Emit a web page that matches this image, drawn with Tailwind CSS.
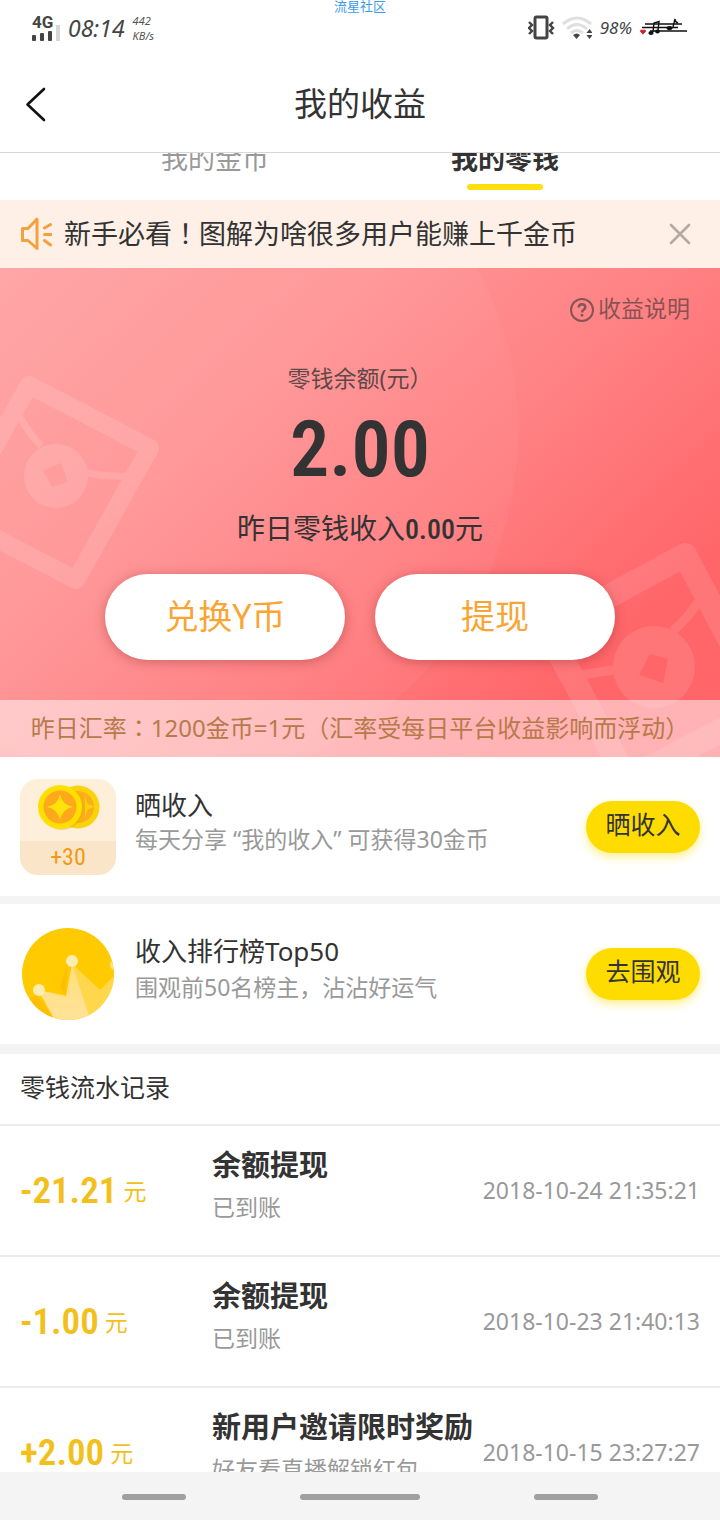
<!DOCTYPE html>
<html lang="zh-CN">
<head>
<meta charset="utf-8">
<meta name="viewport" content="width=device-width, initial-scale=1">
<title>我的收益</title>
<script src="https://cdn.jsdelivr.net/npm/@tailwindcss/browser@4"></script>
</head>
<body class="flex h-screen flex-col overflow-hidden bg-white font-['Noto_Sans','Noto_Sans_CJK_SC',sans-serif] text-[#333]">

<!-- Status bar -->
<div class="relative flex h-14 shrink-0 items-center justify-between pl-8 pr-8">
  <div class="flex items-center gap-2">
    <div class="flex flex-col">
      <span class="font-['Roboto',sans-serif] text-[17px] leading-4 font-bold text-[#444]">4G</span>
      <svg class="h-3 w-7 overflow-visible" viewBox="0 0 28 12" aria-hidden="true">
        <rect x="0" y="5" width="4" height="6" rx="1" fill="#444"/><rect x="8" y="3" width="4" height="8" rx="1" fill="#444"/><rect x="16" y="1" width="4" height="10" rx="1" fill="#444"/><rect x="24" y="-5" width="4" height="16" fill="#d8d8d8"/>
      </svg>
    </div>
    <span class="text-[23px] leading-7 italic text-[#444]">08:14</span>
    <span class="flex flex-col text-[11px] leading-[15px] italic text-[#555]"><span>442</span><span>KB/s</span></span>
  </div>
  <span class="absolute top-0 left-1/2 -translate-x-1/2 text-[13px] leading-3 text-[#3c9be8]">流星社区</span>
  <div class="flex items-center gap-2">
    <svg class="h-7 w-16" viewBox="528 14 64 28" aria-hidden="true" fill="none">
      <rect x="535" y="17" width="12" height="21" rx="1.500" stroke="#444" stroke-width="3"/>
      <path d="M529 22l3 3-3 3 3 3-3 3M553 22l-3 3 3 3-3 3 3 3" stroke="#444" stroke-width="2.400"/>
      <path d="M563 24Q577 12 591 24M567 29Q577 20 587 29M571 33Q577 28 583 33" stroke="#dfdfdf" stroke-width="3"/>
      <path d="M573 35q4-3 7 0l-3.500 4z" fill="#444"/>
      <path d="M589.500 29l3 4h-6zM589.500 39l3-4h-6z" fill="#444"/>
    </svg>
    <span class="text-[17px] leading-7 italic text-[#444]">98%</span>
    <svg class="h-7 w-12" viewBox="640 14 48 28" aria-hidden="true" fill="none">
      <path d="M643 34.500l-3-3q0-2 1.500-2t1.500 1q0-1 1.500-1t1.500 2z" fill="#d3202c"/>
      <path d="M645 24h37M642 27.500h36M650 31h37" stroke="#111" stroke-width="1.300"/>
      <path d="M653 32l1-9 5-1.500-1 9M673 27l2-8q0 3 3 4" stroke="#111" stroke-width="1.400"/>
      <ellipse cx="651" cy="33" rx="2.600" ry="2" fill="#111"/><ellipse cx="657.500" cy="31.500" rx="2.400" ry="2" fill="#111"/><ellipse cx="669.500" cy="28" rx="3" ry="2" fill="#111"/>
    </svg>
  </div>
</div>

<!-- Title bar -->
<header class="grid h-[97px] shrink-0 grid-cols-[80px_1fr_80px] items-center border-b border-[#d8d8d8]">
  <button type="button" aria-label="返回" class="flex h-16 items-center pl-6">
    <svg class="h-9 w-6" viewBox="0 0 24 36" fill="none" stroke="#111" stroke-width="2.600" stroke-linecap="round" stroke-linejoin="round" aria-hidden="true"><path d="M20 3L3.500 18.500L20 34"/></svg>
  </button>
  <h1 class="text-center text-[33px] leading-10">我的收益</h1>
</header>

<main class="flex-1 overflow-hidden">
  <!-- Tabs, partly scrolled under the title bar -->
  <nav class="h-[47px] overflow-hidden px-[70px]">
    <div class="-mt-[14px] grid grid-cols-2 text-[27px] leading-10">
      <a href="#coins" class="flex flex-col items-center text-[#999]">我的金币</a>
      <a href="#change" class="flex flex-col items-center gap-[5px] font-bold">我的零钱<span class="h-[6px] w-19 rounded-sm bg-[#ffdf0d]"></span></a>
    </div>
  </nav>

  <!-- Notice -->
  <div class="flex h-17 items-center bg-[#fef0e6] pr-7 pl-5">
    <svg class="mr-3 h-9 w-8" viewBox="0 0 32 36" fill="none" stroke="#f3a13c" stroke-width="3" stroke-linecap="round" stroke-linejoin="round" aria-hidden="true"><path d="M2.500 12.500h5.500L17 3v29.500L8 24.500H2.500zM24.500 12l6-3.500M24.500 18.500h6.500M24.500 24.500l6 4.500"/></svg>
    <p class="flex-1 pb-[2px] text-[27px] leading-8 whitespace-nowrap">新手必看<span lang="zh-TW" class="font-['Noto_Sans_CJK_TC',sans-serif]">！</span>图解为啥很多用户能赚上千金币</p>
    <button type="button" aria-label="关闭"><svg class="h-6 w-6" viewBox="0 0 24 24" stroke="#b3aaa4" stroke-width="2.600" stroke-linecap="round" aria-hidden="true"><path d="M3 3l18 18M21 3L3 21"/></svg></button>
  </div>

  <!-- Balance -->
  <section class="relative bg-[linear-gradient(137deg,#ffa3a4_0%,#ff9596_30%,#ff8183_55%,#ff666a_82%,#ff6569_100%)]">
    <svg class="absolute inset-0 h-full w-full" viewBox="0 0 720 489" preserveAspectRatio="xMidYMid slice" fill="none" aria-hidden="true">
      <circle cx="165" cy="165" r="353" fill="#fff" fill-opacity=".04"/>
      <g opacity=".12" stroke="#fff" stroke-linejoin="round">
        <path d="M29 117L150 180L76 312L-45 249Z" stroke-width="18"/>
        <path d="M20 149q10 18 21 29M87 205q20 4 40 3" stroke-width="7"/>
        <path d="M56 176a32 32 0 1 1-.1 0zM43 202L52 219L68 214L61 195Z" fill="#fff" fill-rule="evenodd" stroke="none"/>
      </g>
      <g opacity=".1" stroke="#fff" stroke-linejoin="round">
        <path d="M685 287L765 439L627 512L547 362Z" stroke-width="24"/>
        <path d="M673 363q14-12 25-29M613 402l-32 5" stroke-width="9"/>
        <path d="M654 358a41 41 0 1 1-.1 0zM650 386L639 407L663 415L668 391Z" fill="#fff" fill-rule="evenodd" stroke="none"/>
      </g>
    </svg>
    <div class="relative flex flex-col items-center px-5 pt-6 pb-10">
      <a href="#explain" class="mr-[10px] flex items-center gap-1 self-end text-[23px] leading-8 text-[#333]/60">
        <svg class="mt-1 h-6 w-6" viewBox="0 0 24 24" fill="none" stroke="currentColor" stroke-width="2" aria-hidden="true"><circle cx="12" cy="12" r="11"/><path d="M8.700 9.500q0-3.300 3.300-3.300t3.300 3q0 1.500-1.700 2.600T12 14.500" stroke-width="2.400"/><path d="M12 16v2.500" stroke-width="2.600"/></svg>收益说明</a>
      <p class="mt-[38px] text-[23px] leading-8 text-[#333]/80">零钱余额(元）</p>
      <p class="mt-3 font-['Roboto_Condensed','Roboto',sans-serif] text-[78px] leading-[88px] font-semibold">2.00</p>
      <p class="mt-[14px] h-10 text-[28px] leading-10">昨日零钱收入<span class="font-['Roboto_Condensed','Roboto',sans-serif] font-medium">0.00</span>元</p>
      <div class="mt-[26px] flex gap-[30px] text-[34px] leading-10 text-[#f9a534]">
        <button type="button" class="h-[86px] w-60 rounded-full bg-white pb-[2px] shadow-[0_2px_12px_rgba(120,30,30,0.35)]">兑换Y币</button>
        <button type="button" class="h-[86px] w-60 rounded-full bg-white pb-[2px] shadow-[0_2px_12px_rgba(120,30,30,0.35)]">提现</button>
      </div>
    </div>
    <p class="relative h-[57px] overflow-hidden bg-white/50 px-2 text-center text-[24px] leading-[54px] whitespace-nowrap text-[#b87a4a]">昨日汇率<span lang="zh-TW" class="font-['Noto_Sans_CJK_TC',sans-serif]">：</span>1200金币=1元（汇率受每日平台收益影响而浮动）</p>
  </section>

  <!-- Tasks -->
  <section class="flex h-[139px] items-center px-5">
    <div class="mr-[19px] flex h-24 w-24 shrink-0 flex-col overflow-hidden rounded-[18px] bg-[#fdefd9]">
      <svg class="h-[62px] w-24 shrink-0" viewBox="0 0 96 62" aria-hidden="true">
        <circle cx="58" cy="28" r="21.500" fill="#fbd30a"/><circle cx="58" cy="28" r="16" fill="#fbae18"/>
        <path d="M65 17l2.500 8 7 2.500-7 3-2.500 8z" fill="#fbd30a"/>
        <circle cx="42" cy="29" r="22" fill="#e9a90c" opacity=".4"/>
        <circle cx="40" cy="28" r="22" fill="#ffdf00"/><circle cx="40" cy="28" r="16.500" fill="#fda91b"/>
        <path d="M40 15q2 11 13 13q-11 2-13 13q-2-11-13-13q11-2 13-13z" fill="#ffe20a"/>
      </svg>
      <span class="flex-1 bg-[#fae5c8] text-center font-['Roboto_Condensed','Roboto',sans-serif] text-[24px] leading-8 text-[#f09a1c]">+30</span>
    </div>
    <div class="flex-1 pb-3">
      <h2 class="text-[26px] leading-9">晒收入</h2>
      <p class="text-[23px] leading-8 whitespace-nowrap text-[#999]">每天分享 “我的收入” 可获得30金币</p>
    </div>
    <button type="button" class="h-[52px] w-[114px] rounded-full bg-[#ffdc00] pb-[6px] text-[25px] leading-8 shadow-[0_4px_10px_rgba(255,220,0,0.45)]">晒收入</button>
  </section>
  <div class="h-2 bg-[#f4f4f4]"></div>
  <section class="flex h-[140px] items-center px-5">
    <svg class="mr-[19px] h-24 w-24 shrink-0" viewBox="0 0 96 96" aria-hidden="true">
      <defs>
        <clipPath id="disc"><circle cx="48" cy="48" r="46"/></clipPath>
        <linearGradient id="crown" x1="0" y1="0" x2="0" y2="1"><stop offset="0" stop-color="#ffdf7c"/><stop offset="1" stop-color="#ffe299"/></linearGradient>
      </defs>
      <g clip-path="url(#disc)">
        <rect width="96" height="96" fill="#ffcb00"/>
        <path d="M48 32L40 62L46 70zM16 68L34 92L0 80z" fill="#fbb900" opacity=".6"/>
        <path d="M52 38L80 64L96 48V96H60z" fill="#ffd74c"/>
        <path d="M18 64L46 70L52 38L69 90L66 96H36z" fill="url(#crown)"/>
        <circle cx="52" cy="35" r="6" fill="#ffecb0"/><circle cx="19" cy="64" r="6" fill="#ffecb0"/><circle cx="95" cy="39" r="5" fill="#ffe182"/>
      </g>
    </svg>
    <div class="flex-1 pb-3">
      <h2 class="text-[26px] leading-9">收入排行榜Top50</h2>
      <p class="mt-[2px] text-[23px] leading-8 whitespace-nowrap text-[#999]">围观前50名榜主，沾沾好运气</p>
    </div>
    <button type="button" class="h-[52px] w-[114px] rounded-full bg-[#ffdc00] pb-[6px] text-[25px] leading-8 shadow-[0_4px_10px_rgba(255,220,0,0.45)]">去围观</button>
  </section>
  <div class="h-[10px] bg-[#f4f4f4]"></div>

  <!-- Records -->
  <section>
    <h2 class="h-[70px] px-5 text-[25px] leading-[66px]">零钱流水记录</h2>
    <ul>
      <li class="flex h-[131px] items-center border-t-2 border-[#ebebeb] px-5">
        <p class="flex w-48 shrink-0 items-center gap-[6px] text-[#f3bf1a]"><span class="font-['Roboto_Condensed','Roboto',sans-serif] text-[37px] leading-10 font-semibold">-21.21</span><span class="text-[23px] leading-10">元</span></p>
        <div class="flex-1 pb-3"><h3 class="text-[29px] leading-9 font-bold whitespace-nowrap">余额提现</h3><p class="mt-2 text-[23px] leading-8 whitespace-nowrap text-[#999]">已到账</p></div>
        <time class="pb-[2px] text-[23px] leading-8 whitespace-nowrap text-[#999]">2018-10-24 21:35:21</time>
      </li>
      <li class="flex h-[131px] items-center border-t-2 border-[#ebebeb] px-5">
        <p class="flex w-48 shrink-0 items-center gap-[6px] text-[#f3bf1a]"><span class="font-['Roboto_Condensed','Roboto',sans-serif] text-[37px] leading-10 font-semibold">-1.00</span><span class="text-[23px] leading-10">元</span></p>
        <div class="flex-1 pb-3"><h3 class="text-[29px] leading-9 font-bold whitespace-nowrap">余额提现</h3><p class="mt-2 text-[23px] leading-8 whitespace-nowrap text-[#999]">已到账</p></div>
        <time class="pb-[2px] text-[23px] leading-8 whitespace-nowrap text-[#999]">2018-10-23 21:40:13</time>
      </li>
      <li class="flex h-[131px] items-center border-t-2 border-[#ebebeb] px-5">
        <p class="flex w-48 shrink-0 items-center gap-[6px] text-[#f3bf1a]"><span class="font-['Roboto_Condensed','Roboto',sans-serif] text-[37px] leading-10 font-semibold">+2.00</span><span class="text-[23px] leading-10">元</span></p>
        <div class="flex-1 pb-3"><h3 class="text-[29px] leading-9 font-bold whitespace-nowrap">新用户邀请限时奖励</h3><p class="mt-2 text-[23px] leading-8 whitespace-nowrap text-[#999]">好友看直播解锁红包</p></div>
        <time class="pb-[2px] text-[23px] leading-8 whitespace-nowrap text-[#999]">2018-10-15 23:27:27</time>
      </li>
    </ul>
  </section>
</main>

<!-- Gesture bar -->
<footer class="flex h-12 shrink-0 items-center justify-between bg-[#f4f4f4] px-[122px] pt-[2px]">
  <span class="h-[6px] w-16 rounded-full bg-[#a0a0a0]"></span>
  <span class="h-[6px] w-30 rounded-full bg-[#a0a0a0]"></span>
  <span class="h-[6px] w-16 rounded-full bg-[#a0a0a0]"></span>
</footer>
</body>
</html>
